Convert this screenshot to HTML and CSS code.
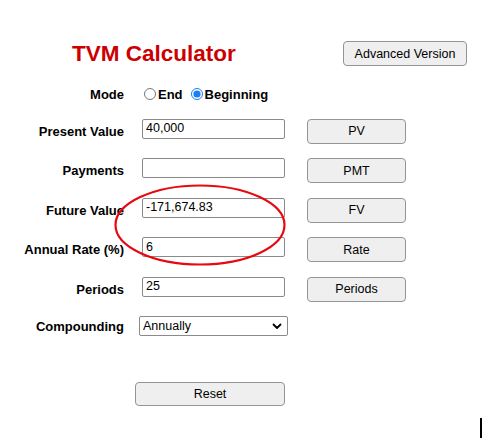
FILE: index.html
```html
<!DOCTYPE html>
<html lang="en">
<head>
    <meta charset="UTF-8">
    <meta name="viewport" content="width=device-width, initial-scale=1.0">
    <title>TVM Calculator</title>
    <link rel="stylesheet" href="styles.css">
</head>
<body>
    <div class="page">
        <div class="header">
            <h1 class="title">TVM Calculator</h1>
            <button class="btn btn-adv">Advanced Version</button>
        </div>

        <div class="form">
            <div class="label">Mode</div>
            <div class="mode">
                <label class="opt"><input type="radio" name="mode">End</label>
                <label class="opt"><input type="radio" name="mode" checked>Beginning</label>
            </div>
            <div></div>

            <label class="label">Present Value</label>
            <input class="field" type="text" value="40,000">
            <button class="btn btn-calc">PV</button>

            <label class="label">Payments</label>
            <input class="field" type="text" value="">
            <button class="btn btn-calc">PMT</button>

            <label class="label">Future Value</label>
            <input class="field" type="text" value="-171,674.83">
            <button class="btn btn-calc">FV</button>

            <label class="label">Annual Rate (%)</label>
            <input class="field" type="text" value="6">
            <button class="btn btn-calc">Rate</button>

            <label class="label">Periods</label>
            <input class="field" type="text" value="25">
            <button class="btn btn-calc">Periods</button>

            <label class="label">Compounding</label>
            <div class="select-wrap">
                <select class="select">
                    <option>Annually</option>
                    <option>Semi-Annually</option>
                    <option>Quarterly</option>
                    <option>Monthly</option>
                </select>
                <svg class="chevron" width="10" height="7" viewBox="0 0 10 7">
                    <path d="M1.5 1.5 L5 5 L8.5 1.5" fill="none" stroke="#000" stroke-width="1.8" stroke-linecap="round" stroke-linejoin="round"/>
                </svg>
            </div>
            <div></div>
        </div>

        <div class="footer">
            <button class="btn btn-reset">Reset</button>
        </div>

        <!-- annotation drawn over the FV field -->
        <svg class="mark" width="174" height="84" viewBox="0 0 174 84">
            <ellipse cx="87" cy="42" rx="84.5" ry="39.5" fill="none" stroke="#e8090f" stroke-width="2.2"/>
        </svg>
        <span class="caret"></span>
    </div>
</body>
</html>
```

FILE: styles.css
```css
body {
    margin: 0;
    font-family: "Liberation Sans", Arial, sans-serif;
    color: #000;
    background: #fff;
}

.page {
    position: relative;
    width: 494px;
    height: 440px;
    padding: 41px 8px 0 8px;
    box-sizing: border-box;
}

.header {
    display: flex;
    align-items: center;
    width: 459px;
    height: 25px;
}

.title {
    margin: 0 0 0 64px;
    font-size: 22.5px;
    line-height: 25px;
    font-weight: bold;
    color: #cc0000;
}

.btn {
    font-family: "Liberation Sans", Arial, sans-serif;
    font-size: 12.5px;
    color: #000;
    background: #efefef;
    border: 1px solid #949494;
    border-radius: 4px;
    padding: 0;
    box-sizing: border-box;
}

.btn-adv {
    margin-left: auto;
    width: 124px;
    height: 25px;
}

.form {
    display: grid;
    grid-template-columns: 116px 143px 103px;
    grid-template-rows: 20px repeat(5, 25px) 20px;
    column-gap: 18px;
    row-gap: 14.5px;
    margin-top: 18px;
}

.label {
    justify-self: end;
    align-self: center;
    font-size: 13px;
    font-weight: bold;
}

.mode {
    display: flex;
    align-items: center;
    font-size: 13px;
    font-weight: bold;
    margin-left: 2px;
}

.opt {
    display: flex;
    align-items: center;
    margin-right: 8px;
}

.opt input {
    margin: 0 2px 0 0;
    width: 12px;
    height: 12px;
    accent-color: #1a7ef5;
}

.field {
    align-self: start;
    height: 20px;
    width: 143px;
    box-sizing: border-box;
    border: 1px solid #8a8a8a;
    border-radius: 2px;
    padding: 0 3px 1px 3px;
    font-family: "Liberation Sans", Arial, sans-serif;
    font-size: 12.5px;
    color: #000;
}

.btn-calc {
    width: 99px;
    height: 25px;
    margin-left: 4px;
}

.select-wrap {
    position: relative;
    margin-left: -3px;
    width: 149px;
    height: 20px;
}

.select {
    appearance: none;
    width: 149px;
    height: 20px;
    box-sizing: border-box;
    border: 1px solid #8a8a8a;
    border-radius: 2px;
    background: #fff;
    padding: 0 3px;
    font-family: "Liberation Sans", Arial, sans-serif;
    font-size: 12.5px;
    color: #000;
}

.chevron {
    position: absolute;
    right: 6px;
    top: 7px;
    pointer-events: none;
}

.footer {
    margin-top: 45.5px;
    padding-left: 127px;
}

.btn-reset {
    width: 150px;
    height: 24px;
}

.mark {
    position: absolute;
    left: 113px;
    top: 183px;
}

.caret {
    position: absolute;
    left: 480px;
    top: 418px;
    width: 2px;
    height: 20px;
    background: #000;
}
```
